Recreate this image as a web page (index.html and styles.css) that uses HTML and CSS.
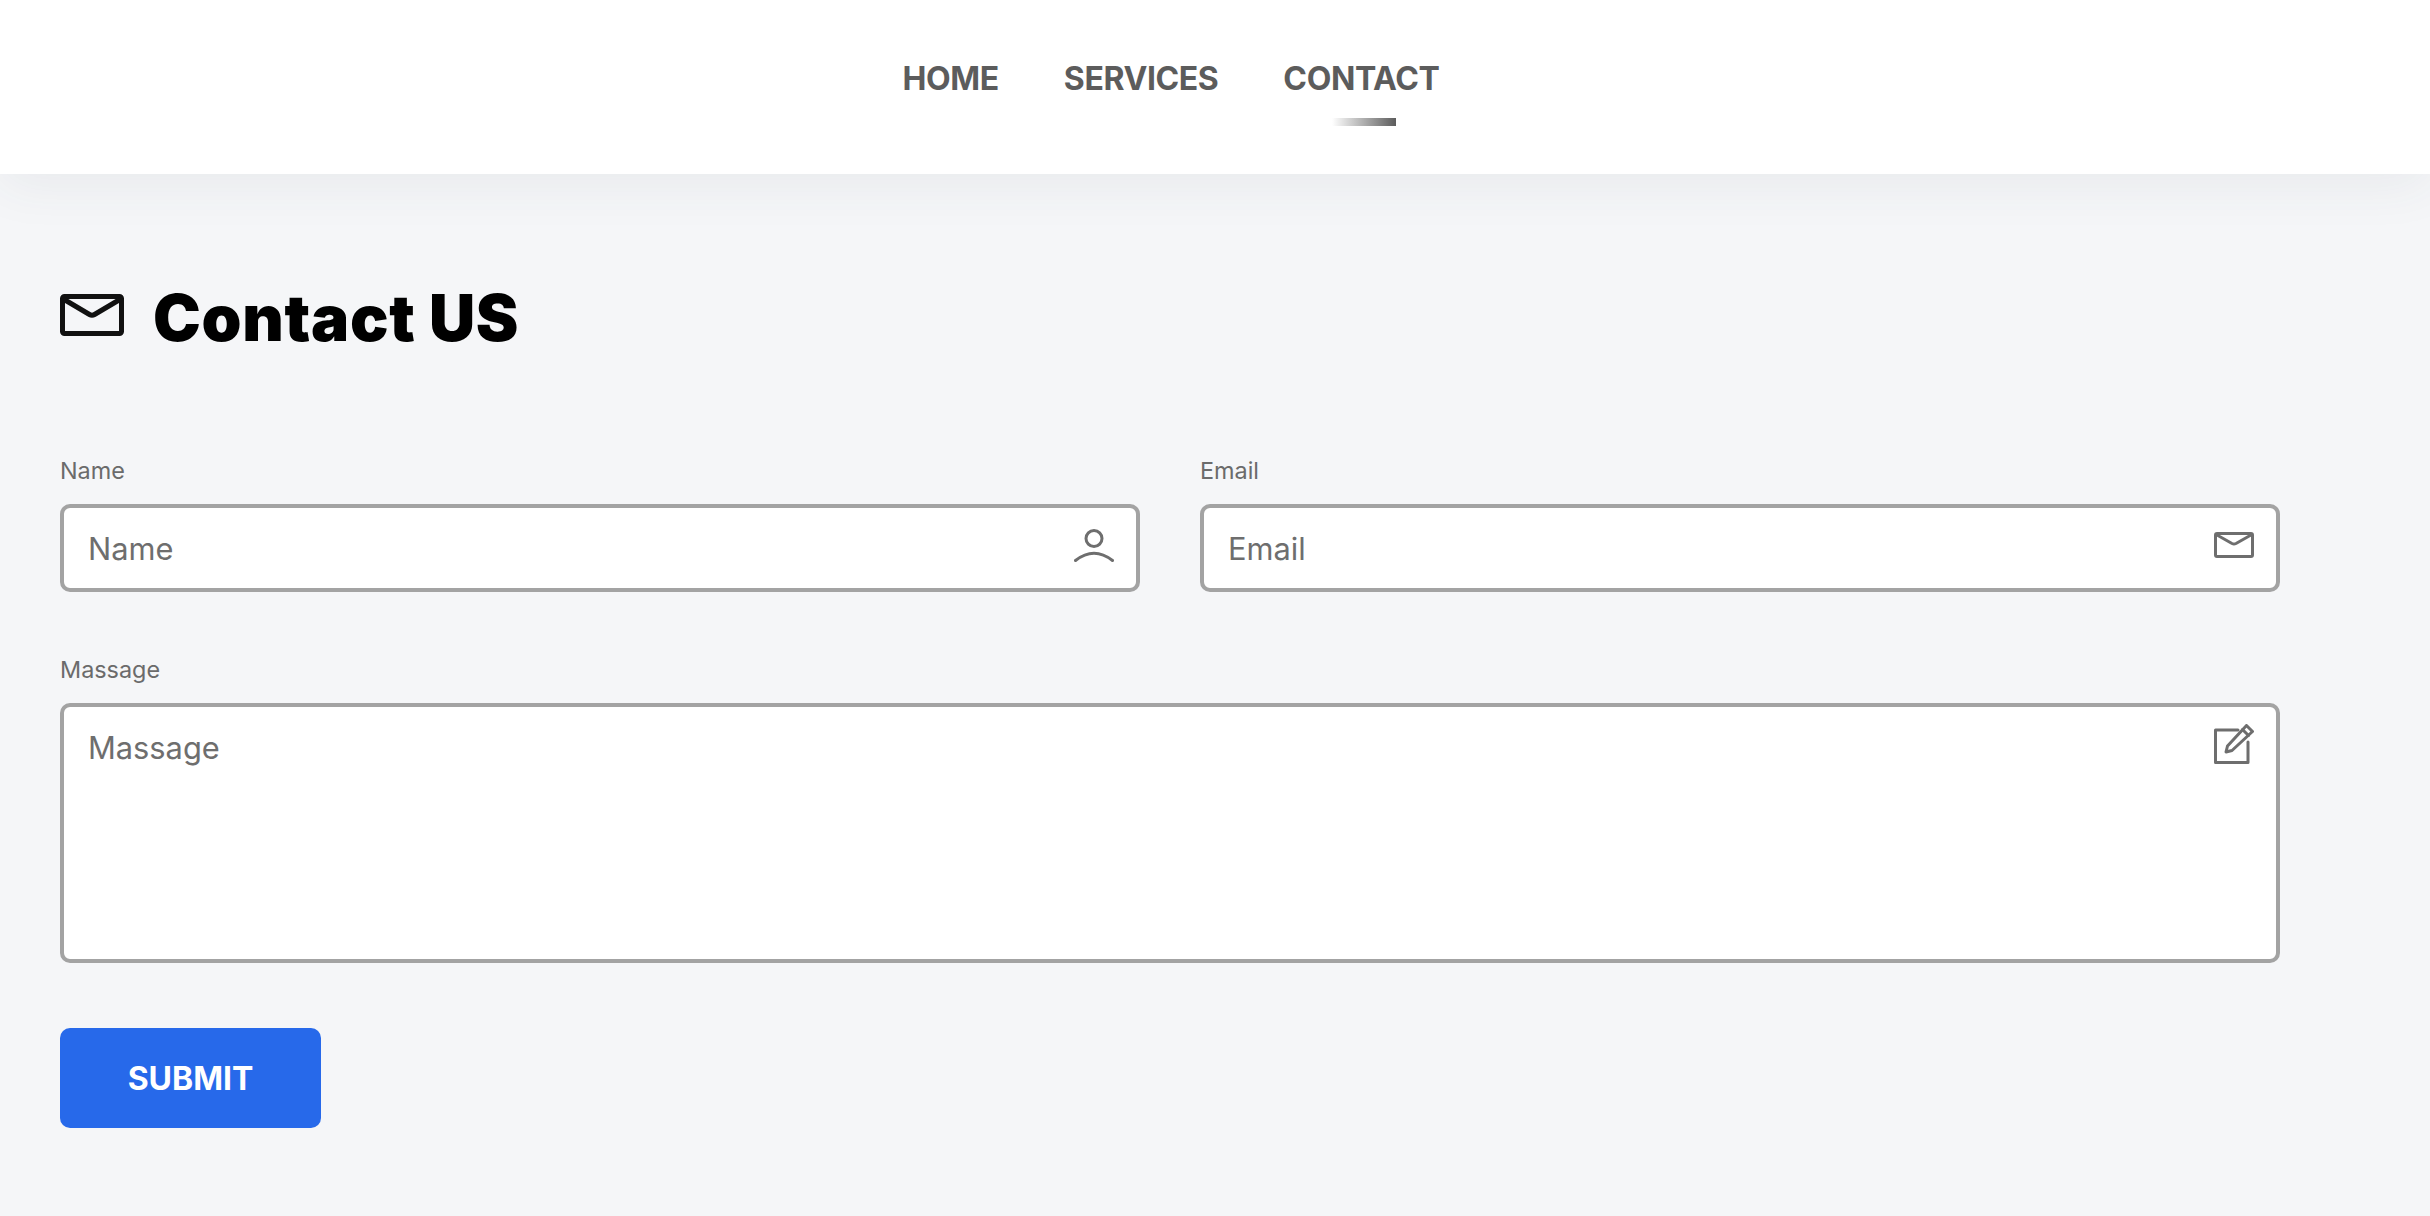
FILE: index.html
```html
<!DOCTYPE html>
<html lang="en">
<head>
<meta charset="utf-8">
<title>Contact US</title>
<link rel="stylesheet" href="styles.css">
</head>
<body>
<header class="header">
  <nav class="nav">
    <a class="nav-link" href="#">HOME</a>
    <a class="nav-link" href="#">SERVICES</a>
    <a class="nav-link nav-link-active" href="#">CONTACT</a>
  </nav>
</header>
<main class="main">
  <h1 class="title">
    <svg class="title-icon" viewBox="0 0 64 42" fill="none" stroke="currentColor" stroke-width="5" stroke-linejoin="round" stroke-linecap="round"><rect x="2.500" y="2.500" width="59" height="37" rx="2"/><path d="M5 6 L29.500 20.500 Q32 22 34.500 20.500 L59 6"/></svg>
    <span>Contact US</span>
  </h1>
  <form class="form">
    <div class="row">
      <div class="field">
        <label class="label" for="name">Name</label>
        <div class="control">
          <input class="input" id="name" type="text" placeholder="Name">
          <svg class="icon icon-user" viewBox="0 0 40 33" fill="none" stroke="currentColor" stroke-width="3" stroke-linecap="round"><circle cx="20" cy="9.500" r="8"/><path d="M1.500 31.500 Q20 17 38.500 31.500"/></svg>
        </div>
      </div>
      <div class="field">
        <label class="label" for="email">Email</label>
        <div class="control">
          <input class="input" id="email" type="email" placeholder="Email">
          <svg class="icon icon-mail" viewBox="0 0 40 26" fill="none" stroke="currentColor" stroke-width="3" stroke-linejoin="round" stroke-linecap="round"><rect x="1.500" y="1.500" width="37" height="23" rx="1.500"/><path d="M3 3 L18 11.500 Q20 12.500 22 11.500 L37 3"/></svg>
        </div>
      </div>
    </div>
    <div class="field">
      <label class="label" for="message">Massage</label>
      <div class="control">
        <textarea class="input textarea" id="message" placeholder="Massage"></textarea>
        <svg class="icon icon-edit" viewBox="0 0 40 40" fill="none" stroke="currentColor" stroke-width="3" stroke-linejoin="round" stroke-linecap="round"><path d="M24 6 H1.500 V38.500 H34 V18"/><path d="M32.500 1.500 L38.500 7.500 L18 26.500 L12 28 L13.500 22 Z"/><path d="M28.500 5.500 L34.500 11.500"/></svg>
      </div>
    </div>
    <button class="submit" type="submit">SUBMIT</button>
  </form>
</main>
</body>
</html>
```

FILE: styles.css
```css
* { box-sizing: border-box; }
html, body { margin: 0; }
body {
  min-height: 1216px;
  background: #f5f6f8;
  font-family: Inter, "Liberation Sans", sans-serif;
  color: #6b6b6b;
}
.header {
  height: 174px;
  background: #fff;
  display: flex;
  justify-content: center;
  box-shadow: 0 10px 50px rgba(60, 64, 80, 0.07);
}
.nav {
  display: flex;
  gap: 65px;
  margin-right: 88px;
  padding-top: 58px;
}
.nav-link {
  position: relative;
  height: 42px;
  font-size: 32px;
  line-height: 42px;
  font-weight: 700;
  letter-spacing: -0.4px;
  color: #5c5c5c;
  text-decoration: none;
}
.nav-link-active::after {
  content: "";
  position: absolute;
  left: 49px;
  top: 60px;
  width: 64px;
  height: 8px;
  background: linear-gradient(90deg, #ffffff, #5c5c5c);
}
.main { padding: 109px 60px 0; width: 2340px; }
.title {
  display: flex;
  align-items: center;
  gap: 29px;
  margin: 0;
  height: 70px;
  font-size: 64px;
  line-height: 70px;
  font-weight: 900;
  letter-spacing: 0.7px;
  color: #000;
}
.title-icon { width: 64px; height: 42px; color: #111; margin-top: -6px; }
.form { margin-top: 103px; display: flex; flex-direction: column; gap: 63px; }
.row { display: grid; grid-template-columns: 1080px 1080px; column-gap: 60px; }
.field { display: flex; flex-direction: column; gap: 18px; }
.label { font-size: 23.4px; line-height: 30px; color: #6b6b6b; }
.control { position: relative; display: flex; }
.input {
  display: block;
  width: 100%;
  height: 88px;
  border: 4px solid #a3a3a3;
  border-radius: 10px;
  background: #fff;
  padding: 0 24px;
  font-family: inherit;
  font-size: 30.8px;
  color: #6b6b6b;
  outline: none;
}
.input::placeholder { color: #6e6e6e; opacity: 1; }
.textarea { height: 260px; padding: 23px 24px; line-height: 36px; resize: none; }
.icon { position: absolute; right: 26px; color: #6e6e6e; }
.icon-user { top: 25px; width: 40px; height: 33px; }
.icon-mail { top: 28px; width: 40px; height: 26px; }
.icon-edit { top: 21px; width: 40px; height: 40px; }
.submit {
  width: 261px;
  height: 100px;
  margin-top: 2px;
  border: 0;
  border-radius: 10px;
  background: #2769ea;
  color: #fff;
  font-family: inherit;
  font-size: 32px;
  font-weight: 700;
}
```
